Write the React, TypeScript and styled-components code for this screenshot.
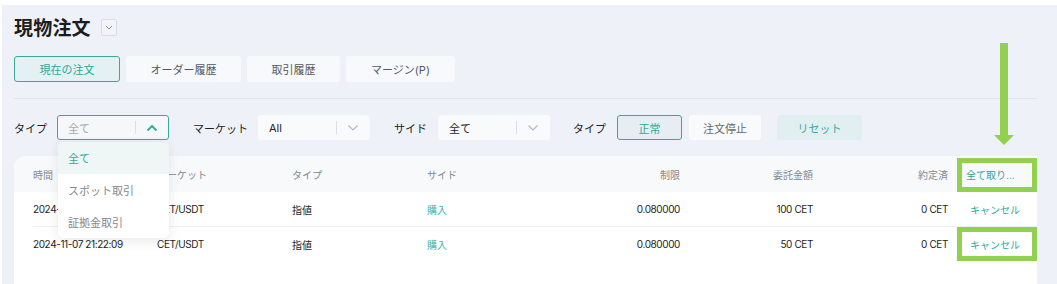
import styled, { createGlobalStyle } from "styled-components";
import { FC } from "react";

const GlobalStyle = createGlobalStyle`
  html, body {
    margin: 0;
    padding: 0;
    background: #ffffff;
    font-family: "Inter", "Noto Sans CJK JP", "Noto Sans", sans-serif;
    -webkit-font-smoothing: antialiased;
  }
  * { box-sizing: border-box; }
`;

const TEAL = "#2ea89b";
const GREEN = "#92d050";

const Page = styled.div`
  padding: 5px 0 0 2px;
  height: 284px;
  overflow: hidden;
`;

const Main = styled.div`
  position: relative;
  height: 279px;
  background: #eef1f8;
  padding: 10px 20px 0 12px;
  display: flex;
  flex-direction: column;
`;

const TitleRow = styled.div`
  display: flex;
  align-items: center;
  gap: 10px;
  height: 22px;
`;

const Title = styled.h1`
  margin: 0;
  font-size: 19px;
  font-weight: 700;
  color: #1c1c1c;
  letter-spacing: 0.2px;
`;

const TitleToggle = styled.div`
  width: 16px;
  height: 17px;
  border: 1px solid #d9dce3;
  border-radius: 2px;
  background: #f2f4f8;
  display: flex;
  align-items: center;
  justify-content: center;
  margin-top: 2px;
`;

const Tabs = styled.div`
  display: flex;
  gap: 6px;
  margin-top: 19px;
`;

const Tab = styled.div<{ $active?: boolean; $w: number }>`
  width: ${(p) => p.$w}px;
  height: 26px;
  border-radius: 3px;
  display: flex;
  align-items: center;
  justify-content: center;
  font-size: 11px;
  color: ${(p) => (p.$active ? TEAL : "#555a60")};
  background: ${(p) => (p.$active ? "#e4f1f2" : "#f8f9fc")};
  border: 1px solid ${(p) => (p.$active ? "#3aa99c" : "transparent")};
`;

const Divider = styled.div`
  height: 1px;
  background: #e1e4ea;
  margin-top: 16px;
`;

const Filters = styled.div`
  display: flex;
  align-items: center;
  margin-top: 16px;
  height: 25px;
  font-size: 11px;
  color: #222;
`;

const FilterGroup = styled.div<{ $lead?: number }>`
  display: flex;
  align-items: center;
  margin-left: ${(p) => p.$lead ?? 0}px;
  position: relative;
`;

const Label = styled.span<{ $w: number }>`
  width: ${(p) => p.$w}px;
  white-space: nowrap;
`;

const Select = styled.div<{ $open?: boolean }>`
  width: 112px;
  height: 25px;
  border-radius: 3px;
  background: ${(p) => (p.$open ? "#f5f7fa" : "#f9fafc")};
  border: 1px solid ${(p) => (p.$open ? "#3aa99c" : "transparent")};
  display: flex;
  align-items: center;
  padding-left: 10px;
`;

const SelectValue = styled.span<{ $muted?: boolean }>`
  flex: 1;
  font-size: 11px;
  color: ${(p) => (p.$muted ? "#a6a9ae" : "#222")};
`;

const SelectArrow = styled.div`
  width: 33px;
  height: 13px;
  border-left: 1px solid #dcdfe4;
  display: flex;
  align-items: center;
  justify-content: center;
`;

const Menu = styled.div`
  position: absolute;
  top: 27px;
  left: 44px;
  width: 111px;
  background: #ffffff;
  border-radius: 6px;
  box-shadow: 0 3px 12px rgba(30, 40, 60, 0.1);
  overflow: hidden;
  z-index: 5;
`;

const MenuItem = styled.div<{ $active?: boolean }>`
  height: 32px;
  display: flex;
  align-items: center;
  padding-left: 10px;
  font-size: 11px;
  color: ${(p) => (p.$active ? TEAL : "#85898f")};
  background: ${(p) => (p.$active ? "#eef7f6" : "#ffffff")};
`;

const Toggle = styled.div<{ $active?: boolean; $w: number }>`
  width: ${(p) => p.$w}px;
  height: 25px;
  border-radius: 3px;
  display: flex;
  align-items: center;
  justify-content: center;
  font-size: 11px;
  color: ${(p) => (p.$active ? TEAL : "#666a70")};
  background: ${(p) => (p.$active ? "#e6eef4" : "#f9fafc")};
  border: 1px solid ${(p) => (p.$active ? "#3aa99c" : "transparent")};
`;

const ResetButton = styled.div`
  width: 85px;
  height: 25px;
  margin-left: 16px;
  border-radius: 3px;
  background: #e2eff0;
  color: #3aab9f;
  font-size: 11px;
  display: flex;
  align-items: center;
  justify-content: center;
`;

const Panel = styled.div`
  margin-top: 16px;
  flex: 1;
  background: #ffffff;
  border-radius: 12px 0 0 0;
  padding-left: 19px;
`;

const GRID = "124px 135px 135px 133px 120px 133px 135px 89px";

const HeaderRow = styled.div`
  display: grid;
  grid-template-columns: ${GRID};
  height: 36px;
  align-items: center;
  background: #f8f9fb;
  margin-left: -19px;
  padding-left: 19px;
  border-radius: 12px 0 0 0;
  font-size: 10px;
  color: #85898f;
`;

const Row = styled.div<{ $last?: boolean }>`
  display: grid;
  grid-template-columns: ${GRID};
  height: 35px;
  align-items: center;
  font-size: 10px;
  letter-spacing: -0.4px;
  color: #1d1d1d;
  border-bottom: 1px solid ${(p) => (p.$last ? "transparent" : "#eef0f3")};
`;

const Cell = styled.div<{ $right?: boolean; $teal?: boolean }>`
  text-align: ${(p) => (p.$right ? "right" : "left")};
  color: ${(p) => (p.$teal ? "#45b0a4" : "inherit")};
  white-space: nowrap;
`;

const Kanji = styled(Cell)`
  letter-spacing: 0;
`;

const ActionCell = styled.div<{ $pad: number }>`
  position: relative;
  align-self: stretch;
  display: flex;
  align-items: center;
  padding-left: ${(p) => p.$pad}px;
  color: ${TEAL};
  font-size: 10px;
  letter-spacing: 0;
  white-space: nowrap;
`;

const Highlight = styled.div<{ $top: number; $bottom: number }>`
  position: absolute;
  left: 9px;
  right: 0;
  top: ${(p) => p.$top}px;
  bottom: ${(p) => p.$bottom}px;
  border: 5px solid ${GREEN};
  pointer-events: none;
`;

const Arrow = styled.svg`
  position: absolute;
  left: 990px;
  top: 38px;
`;

const Chevron: FC<{ up?: boolean; color: string }> = ({ up, color }) => (
  <svg width="12" height="8" viewBox="0 0 12 8">
    <polyline
      points={up ? "1.5,6.5 6,2 10.5,6.5" : "1.5,1.5 6,6 10.5,1.5"}
      fill="none"
      stroke={color}
      strokeWidth={up ? 1.8 : 1.2}
    />
  </svg>
);

const rows = [
  { time: "2024-11-07 21:22:09", amount: "100 CET" },
  { time: "2024-11-07 21:22:09", amount: "50 CET" },
];

const App: FC = () => {
  return (
    <Page>
      <GlobalStyle />
      <Main>
        <TitleRow>
          <Title>現物注文</Title>
          <TitleToggle>
            <svg width="8" height="5" viewBox="0 0 8 5">
              <polyline points="1,1 4,4 7,1" fill="none" stroke="#8a8f98" strokeWidth="1" />
            </svg>
          </TitleToggle>
        </TitleRow>

        <Tabs>
          <Tab $active $w={106}>現在の注文</Tab>
          <Tab $w={115}>オーダー履歴</Tab>
          <Tab $w={93}>取引履歴</Tab>
          <Tab $w={109}>マージン(P)</Tab>
        </Tabs>

        <Divider />

        <Filters>
          <FilterGroup>
            <Label $w={43}>タイプ</Label>
            <Select $open>
              <SelectValue $muted>全て</SelectValue>
              <SelectArrow>
                <Chevron up color={TEAL} />
              </SelectArrow>
            </Select>
            <Menu>
              <MenuItem $active>全て</MenuItem>
              <MenuItem>スポット取引</MenuItem>
              <MenuItem>証拠金取引</MenuItem>
            </Menu>
          </FilterGroup>
          <FilterGroup $lead={24}>
            <Label $w={65}>マーケット</Label>
            <Select>
              <SelectValue>All</SelectValue>
              <SelectArrow>
                <Chevron color="#b4b8be" />
              </SelectArrow>
            </Select>
          </FilterGroup>
          <FilterGroup $lead={24}>
            <Label $w={44}>サイド</Label>
            <Select>
              <SelectValue>全て</SelectValue>
              <SelectArrow>
                <Chevron color="#b4b8be" />
              </SelectArrow>
            </Select>
          </FilterGroup>
          <FilterGroup $lead={23}>
            <Label $w={44}>タイプ</Label>
            <Toggle $active $w={65}>正常</Toggle>
          </FilterGroup>
          <FilterGroup $lead={7}>
            <Toggle $w={72}>注文停止</Toggle>
          </FilterGroup>
          <ResetButton>リセット</ResetButton>
        </Filters>

        <Panel>
          <HeaderRow>
            <Cell>時間</Cell>
            <Cell>マーケット</Cell>
            <Cell>タイプ</Cell>
            <Cell>サイド</Cell>
            <Cell $right>制限</Cell>
            <Cell $right>委託金額</Cell>
            <Cell $right>約定済</Cell>
            <ActionCell $pad={18}>
              全て取り...
              <Highlight $top={2} $bottom={0} />
            </ActionCell>
          </HeaderRow>
          {rows.map((r, i) => (
            <Row key={i} $last={i === rows.length - 1}>
              <Cell>{r.time}</Cell>
              <Cell>CET/USDT</Cell>
              <Kanji>指値</Kanji>
              <Kanji $teal>購入</Kanji>
              <Cell $right>0.080000</Cell>
              <Cell $right>{r.amount}</Cell>
              <Cell $right>0 CET</Cell>
              <ActionCell $pad={22}>
                キャンセル
                {i === 1 && <Highlight $top={0} $bottom={0} />}
              </ActionCell>
            </Row>
          ))}
        </Panel>

        <Arrow width="24" height="102" viewBox="0 0 24 102">
          <rect x="8" y="0" width="8" height="94" fill={GREEN} />
          <polygon points="2,92 22,92 12,102" fill={GREEN} />
        </Arrow>
      </Main>
    </Page>
  );
};

export default App;
